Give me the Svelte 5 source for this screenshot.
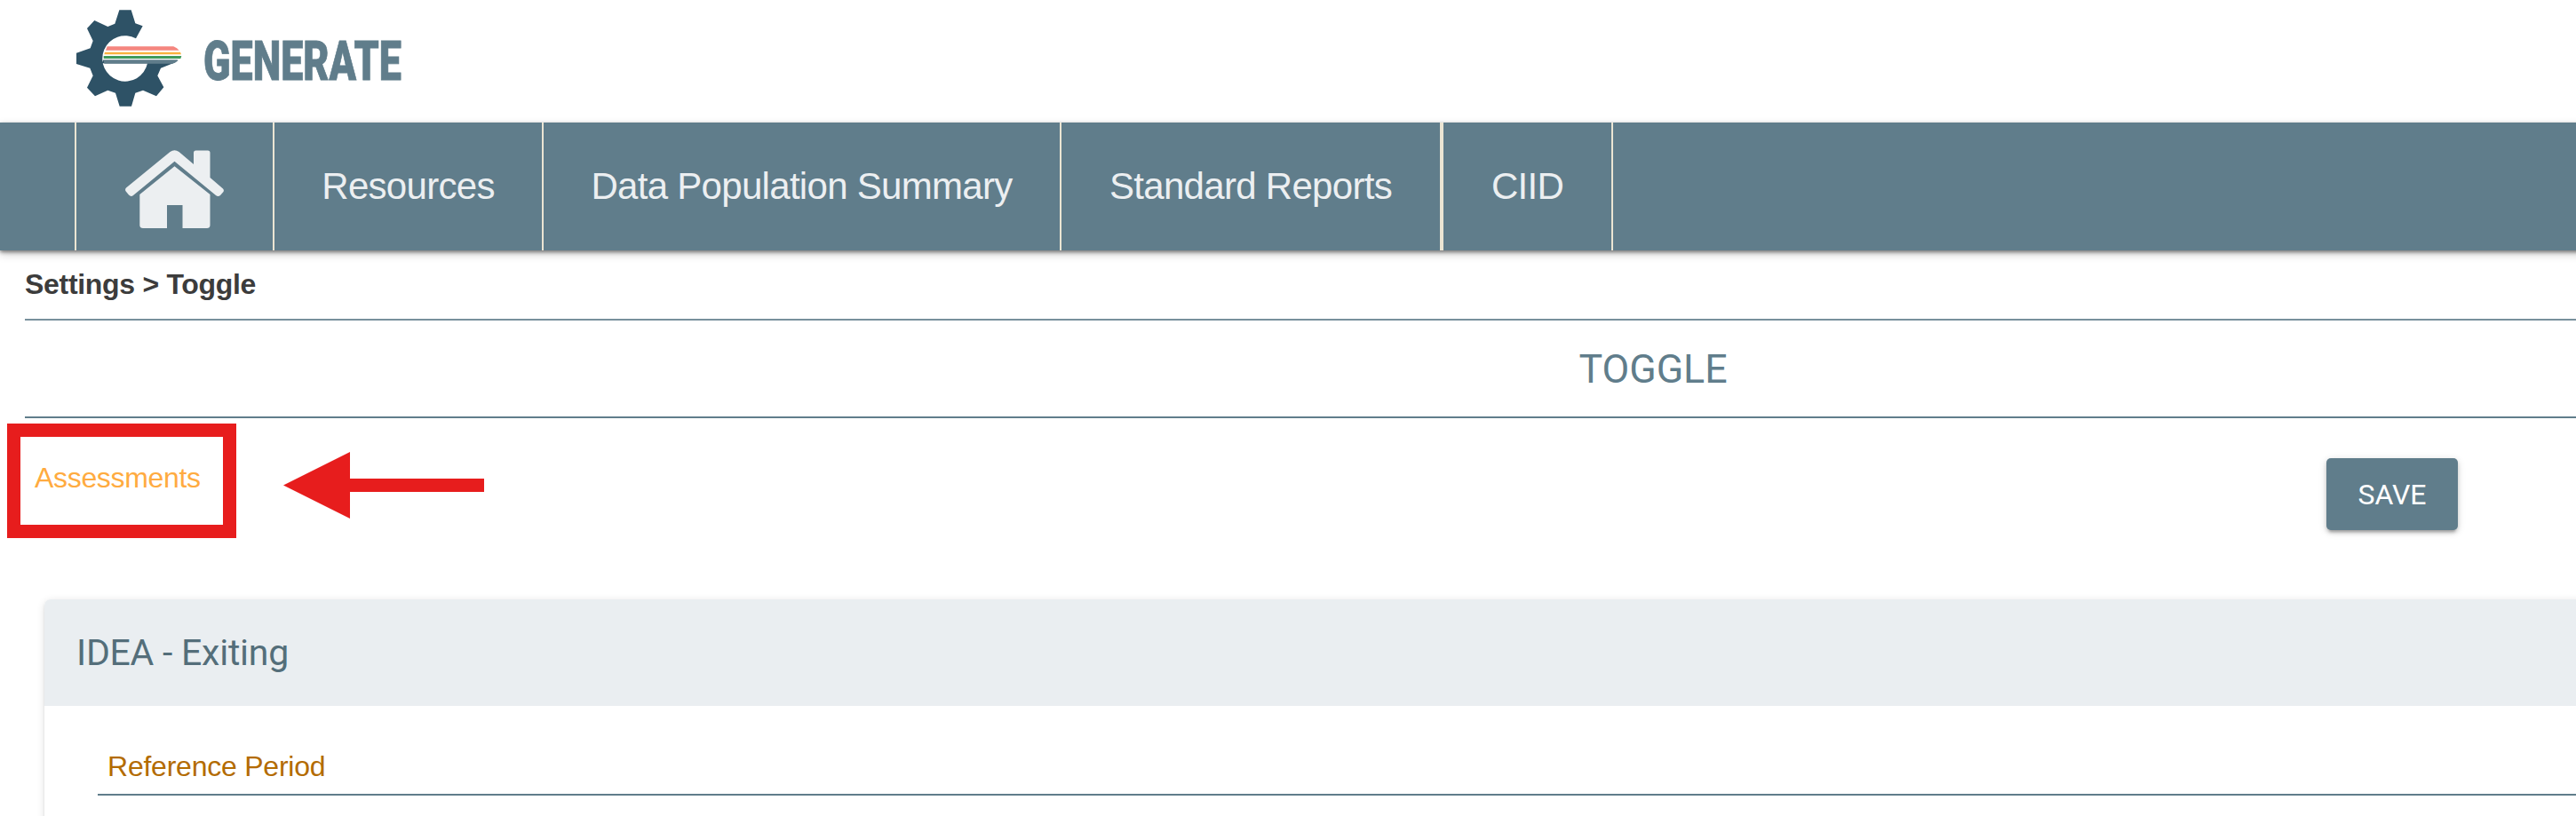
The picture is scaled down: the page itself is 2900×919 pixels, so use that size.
<script>
  const links = [
    { label: 'Resources', width: 303 },
    { label: 'Data Population Summary', width: 583 },
    { label: 'Standard Reports', width: 430, wide: true },
    { label: 'CIID', width: 191 }
  ];
</script>

<div class="viewport">
  <div class="page">
    <header class="brand">
      <svg class="gear" width="122" height="112" viewBox="74 31 366 336" aria-hidden="true">
        <path
          fill="#2e5266"
          d="M222 35H262L276 80L301 89L278 131A77 77 0 1 0 317 215H165L168 203H420L411 212L362 231L351 257L372 296L347 326L302 306L276 315L263 360H223L209 315L183 306L140 326L113 297L133 257L123 231L77 217V180L124 164L133 139L113 97L138 70L183 91L207 81Z"
        />
        <path fill="#fff" d="M183 157H405L432 182V203H168C167 187 173 169 183 157Z" />
        <path fill="#f5867f" d="M181 158H405Q418 163 424 171H176Z" />
        <path fill="#f9b23e" d="M173 177H428L431 185H171Z" />
        <path fill="#3f9a5a" d="M169 190H432L429 199H169Z" />
        <path fill="#607d8b" d="M169 205H421Q414 212 402 216H171Z" />
      </svg>
      <svg class="wordmark" width="226" height="60" viewBox="0 0 226 60">
        <text x="1" y="51.5" textLength="223" lengthAdjust="spacingAndGlyphs">GENERATE</text>
      </svg>
    </header>

    <nav>
      <a class="home" href="#home" aria-label="Home">
        <svg width="111" height="88" viewBox="0 0 111 88">
          <path
            d="M50.5 2Q55.5-1.5 60.5 2L77 16V3Q77 .5 79.500 .5H93Q95.500 .5 95.500 3V31L110 43.500Q111.500 45 110.500 47L107 51Q104.500 53 102 51L55.500 12.700L9 51Q6.500 53 4 50.500L.7 46.500Q-.7 44.500 1 42.500Z"
          />
          <path d="M55.500 18.200L95.500 50V84.500Q95.500 88 92 88H64.500V62H47V88H20Q16.300 88 16.300 84.500V50Z" />
        </svg>
      </a>
      {#each links as link}
        <a class:wide={link.wide} href="#nav" style:width="{link.width}px">{link.label}</a>
      {/each}
    </nav>

    <main>
      <div class="crumbs">Settings &gt; Toggle</div>
      <h1>TOGGLE</h1>
      <div class="actions">
        <a class="tab" href="#assessments">Assessments</a>
        <button>SAVE</button>
      </div>
      <section class="card">
        <h2>IDEA - Exiting</h2>
        <div class="period">Reference Period</div>
      </section>
    </main>
  </div>

  <div class="highlight"></div>
  <svg class="arrow" width="227" height="76" viewBox="0 0 227 76">
    <path fill="#e71d1d" d="M0 37.500L75 0V30H226V45H75V75Z" />
  </svg>
</div>

<style>
  .viewport {
    position: relative;
    width: 100%;
    height: 919px;
    overflow: hidden;
    background: #fff;
    font-family: 'Liberation Sans', Arial, sans-serif;
  }
  .page {
    width: 3722px;
  }
  a {
    text-decoration: none;
  }
  .brand {
    height: 138px;
    display: flex;
    align-items: flex-start;
    padding: 10px 0 0 85px;
    box-sizing: border-box;
  }
  .wordmark {
    margin: 28px 0 0 21px;
    overflow: visible;
  }
  .wordmark text {
    font: 900 61.5px Roboto, sans-serif;
    fill: #607d8b;
    stroke: #607d8b;
    stroke-width: 0.8px;
  }
  nav {
    display: flex;
    height: 144px;
    padding-left: 84px;
    background: #607d8b;
    box-shadow: 0 2px 4px rgba(0, 0, 0, 0.45), 0 4px 10px rgba(0, 0, 0, 0.2);
  }
  nav a {
    box-sizing: border-box;
    display: flex;
    align-items: center;
    justify-content: center;
    border-right: 2px solid #ebe5d3;
    color: #eceff1;
    font-size: 42px;
    letter-spacing: -0.7px;
    white-space: nowrap;
  }
  nav a.wide {
    border-right-width: 4px;
  }
  nav .home {
    width: 225px;
    border-left: 2px solid #ebe5d3;
  }
  .home svg {
    margin-top: 5px;
    fill: #eceff1;
  }
  main {
    padding: 0 28px;
  }
  .crumbs {
    height: 77px;
    line-height: 76px;
    box-sizing: border-box;
    color: #3c3c3c;
    font-size: 32px;
    font-weight: 700;
    letter-spacing: -0.3px;
  }
  h1 {
    margin: 0;
    height: 112px;
    box-sizing: border-box;
    border-top: 2px solid #78909c;
    border-bottom: 2px solid #607d8b;
    text-align: center;
    color: #607d8b;
    font: 400 44.7px/110px Roboto, sans-serif;
  }
  .actions {
    display: flex;
    height: 204px;
    align-items: flex-start;
  }
  .tab {
    width: 2580px;
    padding: 49px 0 0 11px;
    color: #ffab40;
    font-size: 32px;
    line-height: 37px;
    letter-spacing: -0.32px;
  }
  button {
    width: 148px;
    height: 81px;
    margin-top: 45px;
    padding: 0;
    border: 0;
    border-radius: 5px;
    background: #607d8b;
    color: #fff;
    font: 400 32px Roboto, sans-serif;
    box-shadow: 0 5px 3px -3px rgba(0, 0, 0, 0.2), 0 3px 4px rgba(0, 0, 0, 0.16),
      0 2px 10px rgba(0, 0, 0, 0.14);
  }
  .card {
    margin: 0 22px;
    height: 400px;
    border-radius: 7px;
    background: #fff;
    box-shadow: 0 4px 3px -2px rgba(0, 0, 0, 0.14), 0 2px 3px rgba(0, 0, 0, 0.08),
      0 2px 10px rgba(0, 0, 0, 0.12);
  }
  h2 {
    margin: 0;
    height: 120px;
    padding-left: 36px;
    border-radius: 7px 7px 0 0;
    background: #eaeef1;
    color: #546e7a;
    font: 400 41px/120px Roboto, sans-serif;
    letter-spacing: -0.25px;
  }
  .period {
    margin: 0 60px;
    height: 101px;
    padding: 50px 0 0 11px;
    box-sizing: border-box;
    border-bottom: 2px solid #607d8b;
    color: #b36b00;
    font-size: 32px;
    line-height: 37px;
    letter-spacing: -0.23px;
  }
  .highlight {
    position: absolute;
    left: 8px;
    top: 477px;
    width: 258px;
    height: 129px;
    box-sizing: border-box;
    border: 15px solid #e71d1d;
  }
  .arrow {
    position: absolute;
    left: 319px;
    top: 509px;
  }
</style>
